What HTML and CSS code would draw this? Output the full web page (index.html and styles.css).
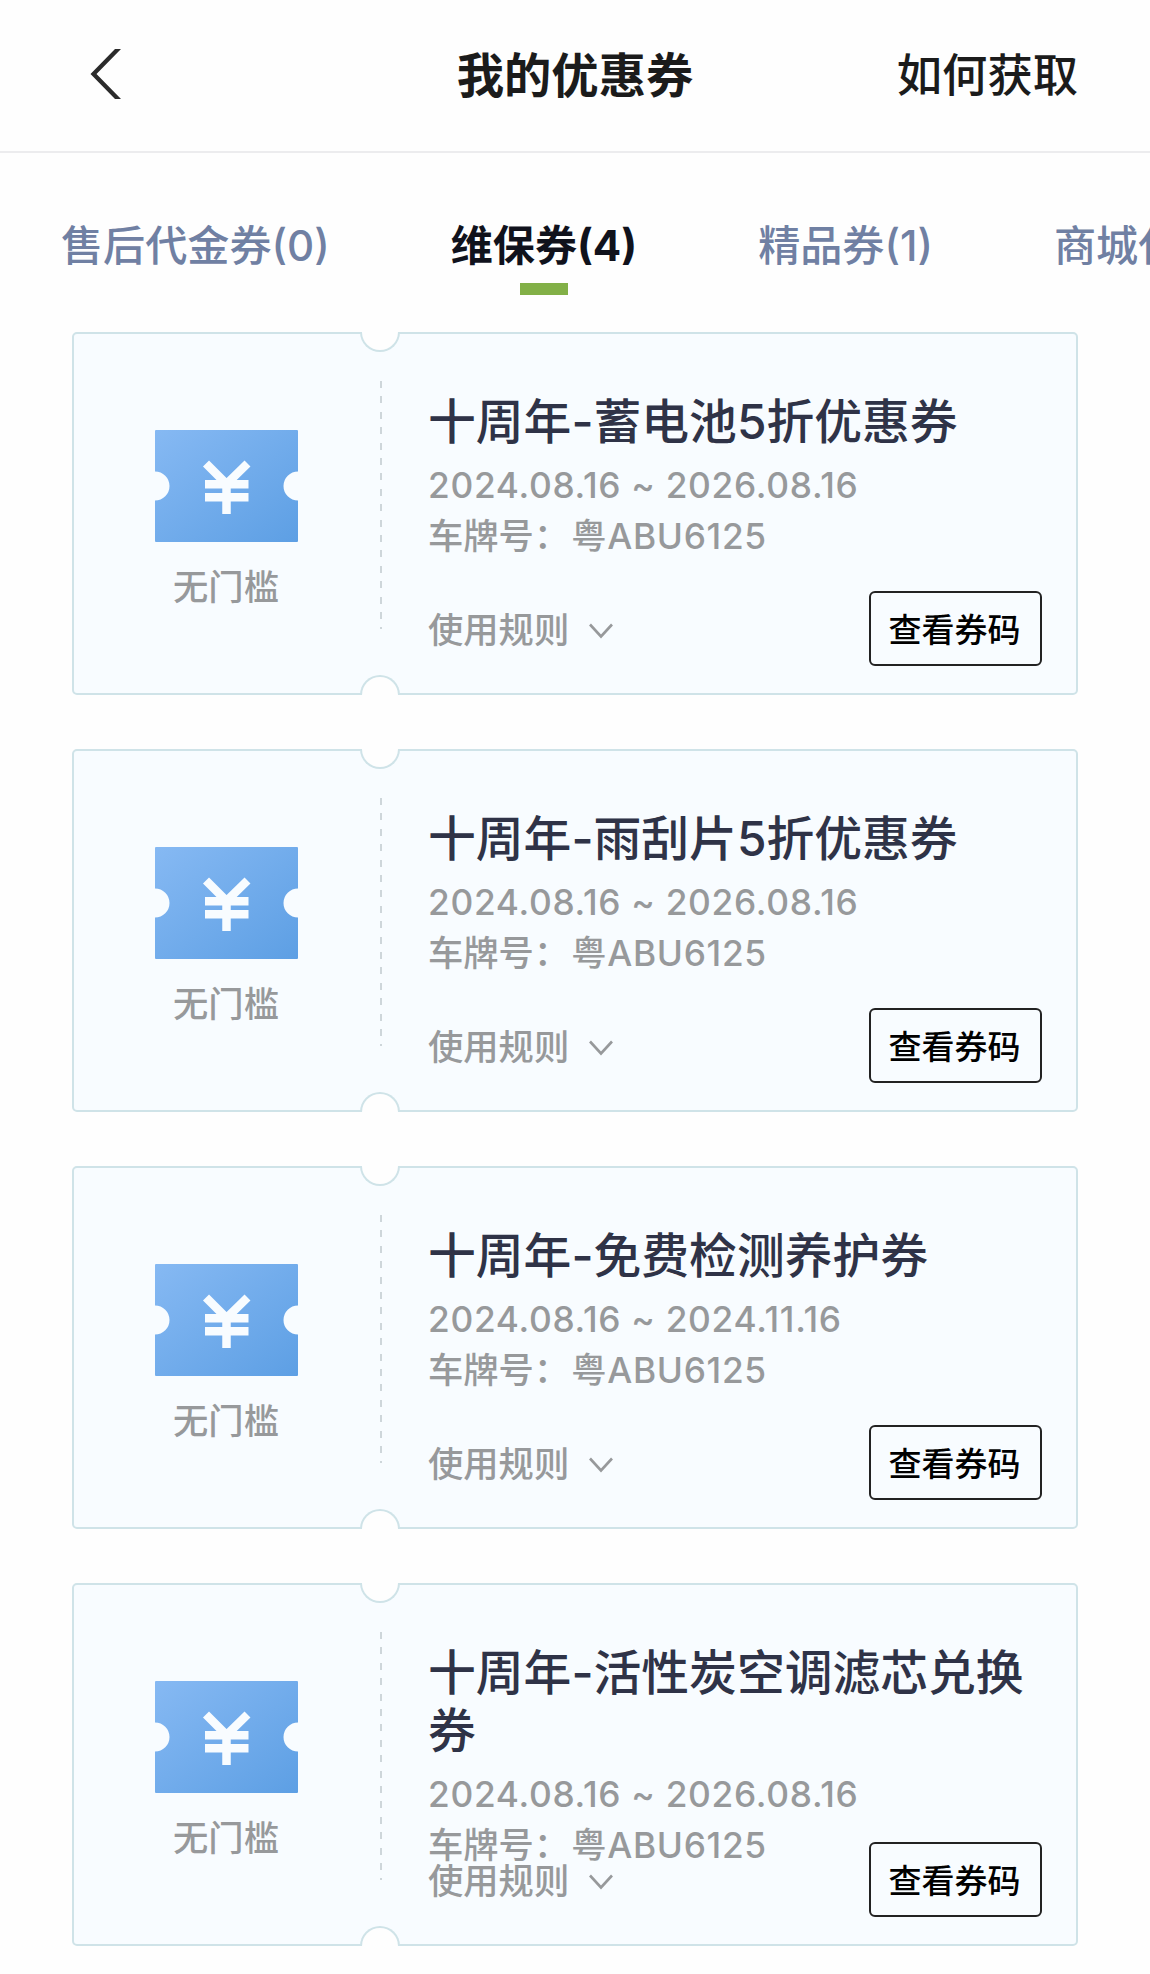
FILE: index.html
```
<!DOCTYPE html>
<html lang="zh-CN">
<head>
    <meta charset="UTF-8">
    <title>我的优惠券</title>
    <link rel="stylesheet" href="styles.css">
</head>
<body>
    <!-- shared icons -->
    <svg class="defs" width="0" height="0">
        <defs>
            <linearGradient id="blue" x1="0" y1="0" x2="1" y2="1">
                <stop offset="0" stop-color="#86b9f3"/>
                <stop offset="1" stop-color="#5d9fe4"/>
            </linearGradient>
        </defs>
        <symbol id="ticket" viewBox="0 0 143 112">
            <path fill="url(#blue)" d="M1 0H142Q143 0 143 1V41.500A14.500 14.500 0 0 0 143 70.500V111Q143 112 142 112H1Q0 112 0 111V70.500A14.500 14.500 0 0 0 0 41.500V1Q0 0 1 0Z"/>
            <path fill="none" stroke="#f8fcff" stroke-width="8.500" d="M51 33.500L71.500 54L92.500 33.500M50 54.200H93.500M50 67.200H93.500M71.500 51V84"/>
        </symbol>
        <symbol id="down" viewBox="0 0 24 16">
            <path fill="none" stroke="#97999b" stroke-width="2.600" d="M1 1.500L12 13.500L23 1.500"/>
        </symbol>
    </svg>

    <header class="header">
        <svg class="back" viewBox="0 0 34 50"><path fill="#2b2b2b" d="M27 0H33L8.500 25L33 50H27L2.500 25Z"/></svg>
        <h1>我的优惠券</h1>
        <a class="how">如何获取</a>
    </header>

    <nav class="tabs">
        <a class="tab">售后代金券(0)</a>
        <a class="tab active">维保券(4)</a>
        <a class="tab">精品券(1)</a>
        <a class="tab">商城代金券(0)</a>
    </nav>

    <main class="list">
        <section class="coupon">
            <div class="left">
                <svg class="ticket"><use href="#ticket"/></svg>
                <span>无门槛</span>
            </div>
            <div class="right">
                <div class="info">
                    <h2>十周年-蓄电池5折优惠券</h2>
                    <p class="date">2024.08.16 ~ 2026.08.16</p>
                    <p>车牌号：<span class="plate">粤ABU6125</span></p>
                </div>
                <div class="foot">
                    <span class="rules">使用规则<svg class="down"><use href="#down"/></svg></span>
                    <button class="code">查看券码</button>
                </div>
            </div>
        </section>

        <section class="coupon">
            <div class="left">
                <svg class="ticket"><use href="#ticket"/></svg>
                <span>无门槛</span>
            </div>
            <div class="right">
                <div class="info">
                    <h2>十周年-雨刮片5折优惠券</h2>
                    <p class="date">2024.08.16 ~ 2026.08.16</p>
                    <p>车牌号：<span class="plate">粤ABU6125</span></p>
                </div>
                <div class="foot">
                    <span class="rules">使用规则<svg class="down"><use href="#down"/></svg></span>
                    <button class="code">查看券码</button>
                </div>
            </div>
        </section>

        <section class="coupon">
            <div class="left">
                <svg class="ticket"><use href="#ticket"/></svg>
                <span>无门槛</span>
            </div>
            <div class="right">
                <div class="info">
                    <h2>十周年-免费检测养护券</h2>
                    <p class="date">2024.08.16 ~ 2024.11.16</p>
                    <p>车牌号：<span class="plate">粤ABU6125</span></p>
                </div>
                <div class="foot">
                    <span class="rules">使用规则<svg class="down"><use href="#down"/></svg></span>
                    <button class="code">查看券码</button>
                </div>
            </div>
        </section>

        <section class="coupon">
            <div class="left">
                <svg class="ticket"><use href="#ticket"/></svg>
                <span>无门槛</span>
            </div>
            <div class="right">
                <div class="info">
                    <h2>十周年-活性炭空调滤芯兑换券</h2>
                    <p class="date">2024.08.16 ~ 2026.08.16</p>
                    <p>车牌号：<span class="plate">粤ABU6125</span></p>
                </div>
                <div class="foot">
                    <span class="rules">使用规则<svg class="down"><use href="#down"/></svg></span>
                    <button class="code">查看券码</button>
                </div>
            </div>
        </section>
    </main>
</body>
</html>
```
FILE: styles.css
```
*,
*::before,
*::after {
    box-sizing: border-box;
}

body {
    margin: 0;
    height: 1974px;
    overflow: hidden;
    background-color: #fefefe;
    font-family: Inter, "Noto Sans CJK SC", sans-serif;
}

h1, h2, p {
    margin: 0;
}

.defs {
    display: block;
}

.header {
    display: grid;
    grid-template-columns: 1fr auto 1fr;
    align-items: center;
    height: 153px;
    padding: 0 72px 0 88px;
    border-bottom: 2px solid #ececee;
    color: #1b1b1b;
}

.back {
    width: 34px;
    height: 50px;
    margin-bottom: 3px;
}

.header h1 {
    font-size: 47.3px;
    line-height: 60px;
    font-weight: 700;
    margin-left: -16px;
}

.how {
    justify-self: end;
    font-size: 45.3px;
    line-height: 60px;
    font-weight: 500;
}

.tabs {
    display: flex;
    gap: 121px;
    height: 179px;
    padding: 63px 0 0 61px;
    overflow: hidden;
    white-space: nowrap;
}

.tab {
    display: flex;
    flex-direction: column;
    align-items: center;
    flex-shrink: 0;
    font-size: 42.1px;
    line-height: 60px;
    font-weight: 500;
    color: #7080a3;
}

.tab.active {
    color: #10121c;
    font-weight: 700;
}

.tab.active::after {
    content: "";
    width: 48px;
    height: 12px;
    margin-top: 7px;
    background-color: #82b047;
}

.list {
    display: flex;
    flex-direction: column;
    gap: 54px;
    padding: 0 72px;
}

.coupon {
    position: relative;
    display: flex;
    flex-shrink: 0;
    height: 363px;
    border: 2px solid #cfe3e8;
    border-radius: 5px;
    background-color: #f8fcff;
}

/* half-round cutouts over the top and bottom edges */
.coupon::before,
.coupon::after {
    content: "";
    position: absolute;
    left: 286px;
    width: 40px;
    height: 20px;
    border: 2px solid #cfe3e8;
    background-color: #fefefe;
}

.coupon::before {
    top: -2px;
    border-top: none;
    border-radius: 0 0 20px 20px;
}

.coupon::after {
    bottom: -2px;
    border-bottom: none;
    border-radius: 20px 20px 0 0;
}

.left {
    display: flex;
    flex-direction: column;
    align-items: center;
    width: 308px;
    padding: 96px 4px 0 0;
    background: repeating-linear-gradient(#ced6da 0 7px, transparent 7px 15.4px) right 47px / 2px 248px no-repeat;
    font-size: 35.3px;
    line-height: 50px;
    font-weight: 500;
    color: #97999b;
}

.ticket {
    width: 143px;
    height: 112px;
    margin-bottom: 21px;
}

.right {
    display: flex;
    flex-direction: column;
    flex: 1;
    padding: 59px 34px 27px 46px;
}

.info {
    flex: 1;
    min-height: 0;
    color: #97999b;
}

.info h2 {
    margin-bottom: 9px;
    font-size: 47.8px;
    line-height: 58px;
    font-weight: 500;
    color: #2f3347;
}

.info p {
    font-size: 35.3px;
    line-height: 51px;
    font-weight: 500;
    white-space: nowrap;
}

.info .date {
    letter-spacing: 0.7px;
}

.plate {
    margin-left: 2px;
    letter-spacing: 0.7px;
}

.foot {
    display: flex;
    justify-content: space-between;
    align-items: center;
    height: 75px;
    font-size: 35.3px;
    font-weight: 500;
    color: #97999b;
}

.rules {
    display: flex;
    align-items: center;
    line-height: 36px;
    padding-top: 5px;
}

.down {
    width: 24px;
    height: 16px;
    margin-left: 20px;
}

.code {
    width: 173px;
    height: 75px;
    padding: 0 2px 2px 0;
    border: 2px solid #222;
    border-radius: 6px;
    background: none;
    font-family: inherit;
    font-size: 33px;
    font-weight: 500;
    color: #000;
}
```
